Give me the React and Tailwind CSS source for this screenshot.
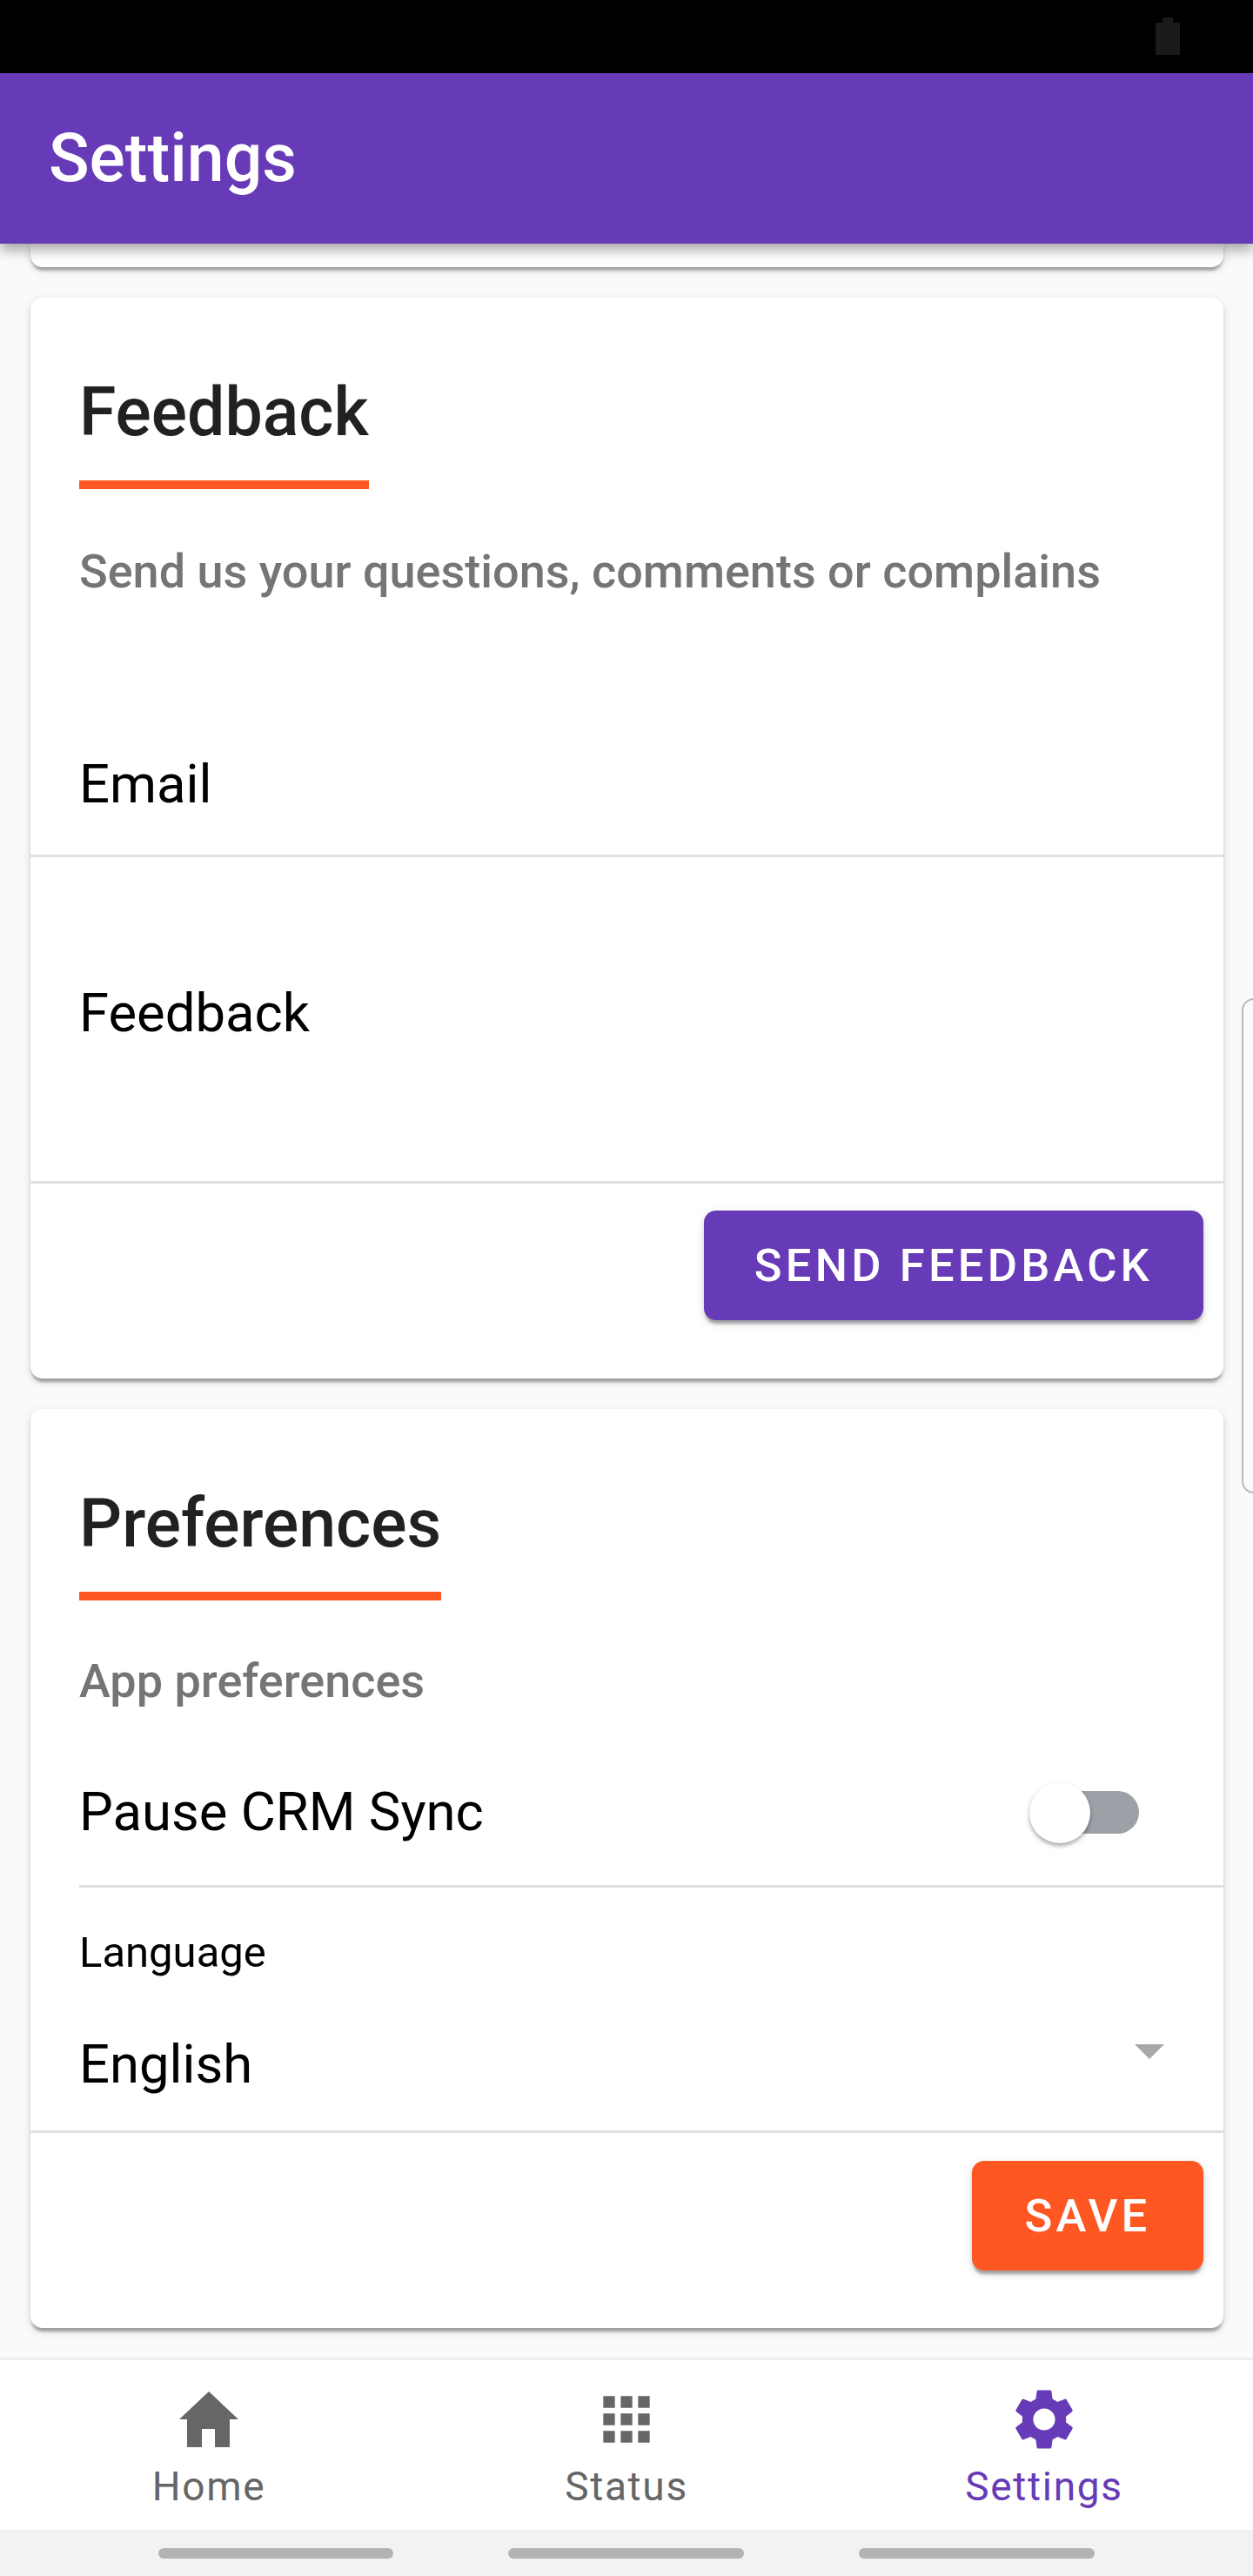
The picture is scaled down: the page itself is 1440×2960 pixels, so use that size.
import React from "react"

const font = { fontFamily: "Roboto, sans-serif" }

function NavItem({ label, active, children }) {
  return (
    <div className={`flex-1 flex flex-col items-center ${active ? "text-[#673ab7]" : "text-[#666666]"}`}>
      <div className="h-[88px] flex items-end justify-center">{children}</div>
      <span className="text-[46px] leading-[60px] mt-[5px] tracking-[1.7px]">{label}</span>
    </div>
  )
}

function CardTitle({ children }) {
  return (
    <div className="self-start ml-[56px] mt-[82px] border-b-[10px] border-[#ff5722] h-[138px]">
      <h2 className="text-[77px] leading-[92px] mt-[4px] font-medium text-[#212121]">{children}</h2>
    </div>
  )
}

function ActionButton({ color, children }) {
  return (
    <button className={`h-[126px] min-w-[266px] px-[58px] rounded-[14px] text-white text-[52.5px] font-medium tracking-[4.2px] shadow-[0_7px_3.5px_-3.5px_rgba(0,0,0,0.2),0_3.5px_3.5px_0_rgba(0,0,0,0.14),0_3.5px_10.5px_0_rgba(0,0,0,0.12)] ${color}`}>
      {children}
    </button>
  )
}

const cardClass = "bg-white rounded-[14px] ml-[35px] mr-[34px] shadow-[0_7px_3.5px_-3.5px_rgba(0,0,0,0.2),0_3.5px_3.5px_0_rgba(0,0,0,0.14),0_3.5px_10.5px_0_rgba(0,0,0,0.12)] flex flex-col"

export default function App() {
  return (
    <div className="relative w-[1440px] h-[2960px] flex flex-col overflow-hidden bg-[#fafafa]" style={font}>
      {/* status bar */}
      <div className="h-[84px] bg-black flex justify-end items-start pr-[84px] shrink-0">
        <svg width="28" height="43" viewBox="0 0 28 43" className="mt-[20px]">
          <path d="M8 0h12v6h8v37H0V6h8z" fill="#1a1a1a" />
        </svg>
      </div>

      {/* app bar */}
      <div className="relative z-10 h-[196px] bg-[#673ab7] flex items-center pl-[56px] shrink-0 shadow-[0_7px_14px_rgba(0,0,0,0.35)]">
        <h1 className="text-[77px] font-medium text-white leading-none">Settings</h1>
      </div>

      {/* scroll area */}
      <div className="flex-1 flex flex-col overflow-hidden">
        <div className={`${cardClass} h-[27px] rounded-t-none`} />

        <div className={`${cardClass} h-[1242px] mt-[35px]`}>
          <CardTitle>Feedback</CardTitle>
          <p className="ml-[56px] mt-[60px] text-[54px] leading-[70px] font-medium text-[#757575]">
            Send us your questions, comments or complains
          </p>
          <div className="h-[293px] border-b-[3px] border-[#e0e0e0] flex items-end pl-[56px] pb-[41px] text-[61.6px] leading-[80px] text-black">
            Email
          </div>
          <div className="h-[375px] border-b-[3px] border-[#e0e0e0] pl-[56px] pt-[139px] text-[61.6px] leading-[80px] text-black">
            Feedback
          </div>
          <div className="flex justify-end pr-[23px] pt-[31px]">
            <ActionButton color="bg-[#673ab7]">SEND FEEDBACK</ActionButton>
          </div>
        </div>

        <div className={`${cardClass} h-[1056px] mt-[35px]`}>
          <CardTitle>Preferences</CardTitle>
          <p className="ml-[56px] mt-[58px] text-[54px] leading-[70px] font-medium text-[#757575]">App preferences</p>
          <div className="ml-[56px] h-[202px] pt-[32px] border-b-[3px] border-[#e0e0e0] flex items-center justify-between pr-[97px] text-[61.6px] text-black">
            <span>Pause CRM Sync</span>
            <div className="relative w-[119px] h-[49px] rounded-full bg-[#9ea0a7]">
              <div className="absolute -left-[7px] -top-[10px] w-[70px] h-[70px] rounded-full bg-white shadow-[0_3px_5px_rgba(0,0,0,0.35)]" />
            </div>
          </div>
          <div className="h-[282px] border-b-[3px] border-[#e0e0e0] pl-[56px] relative text-black">
            <div className="text-[49px] leading-[60px] pt-[45px]">Language</div>
            <div className="text-[61.6px] leading-[80px] mt-[58px]">English</div>
            <div className="absolute right-[68px] top-[180px] w-0 h-0 border-l-[17px] border-r-[17px] border-t-[17px] border-l-transparent border-r-transparent border-t-[#a8a8ab]" />
          </div>
          <div className="flex justify-end pr-[23px] pt-[32px]">
            <ActionButton color="bg-[#ff5722]">SAVE</ActionButton>
          </div>
        </div>
      </div>

      {/* bottom nav */}
      <div className="h-[198px] bg-white border-t-[3px] border-[#eeeeee] flex shrink-0 pt-[22px]">
        <NavItem label="Home">
          <svg width="68" height="64" viewBox="0 0 68 64" fill="currentColor" className="mb-[10px]">
            <path d="M34 0L68 32H58V64H41V43H26V64H9V32H0Z" />
          </svg>
        </NavItem>
        <NavItem label="Status">
          <svg width="80" height="80" viewBox="0 0 24 24" fill="currentColor" className="mb-[2px]">
            <path d="M4 8h4V4H4v4zm6 12h4v-4h-4v4zm-6 0h4v-4H4v4zm0-6h4v-4H4v4zm6 0h4v-4h-4v4zm6-10v4h4V4h-4zm-6 4h4V4h-4v4zm6 6h4v-4h-4v4zm0 6h4v-4h-4v4z" />
          </svg>
        </NavItem>
        <NavItem label="Settings" active>
          <svg width="84" height="84" viewBox="0 0 24 24" fill="currentColor">
            <path d="M19.14 12.94c.04-.3.06-.61.06-.94 0-.32-.02-.64-.07-.94l2.03-1.58c.18-.14.23-.41.12-.61l-1.92-3.32c-.12-.22-.37-.29-.59-.22l-2.39.96c-.5-.38-1.03-.7-1.62-.94l-.36-2.54c-.04-.24-.24-.41-.48-.41h-3.84c-.24 0-.43.17-.47.41l-.36 2.54c-.59.24-1.13.57-1.62.94l-2.39-.96c-.22-.08-.47 0-.59.22L2.74 8.87c-.12.21-.08.47.12.61l2.03 1.58c-.05.3-.09.63-.09.94s.02.64.07.94l-2.03 1.58c-.18.14-.23.41-.12.61l1.92 3.32c.12.22.37.29.59.22l2.39-.96c.5.38 1.03.7 1.62.94l.36 2.54c.05.24.24.41.48.41h3.84c.24 0 .44-.17.47-.41l.36-2.54c.59-.24 1.13-.56 1.62-.94l2.39.96c.22.08.47 0 .59-.22l1.92-3.32c.12-.22.07-.47-.12-.61l-2.01-1.58zM12 15.6c-1.98 0-3.6-1.62-3.6-3.6s1.62-3.6 3.6-3.6 3.6 1.62 3.6 3.6-1.62 3.6-3.6 3.6z" />
          </svg>
        </NavItem>
      </div>

      {/* system gesture bar */}
      <div className="h-[53px] bg-[#f2f2f2] shrink-0 flex pl-[182px] pt-[21px] gap-[132px]">
        <div className="w-[270px] h-[12px] rounded-full bg-[#b3b3b3]" />
        <div className="w-[271px] h-[12px] rounded-full bg-[#b3b3b3]" />
        <div className="w-[271px] h-[12px] rounded-full bg-[#b3b3b3]" />
      </div>

      {/* edge panel handle */}
      <div className="absolute left-[1427px] top-[1147px] w-[20px] h-[569px] border-2 border-[#bbbbbb] rounded-l-[14px] bg-[#fbfbfb]" />
    </div>
  )
}
